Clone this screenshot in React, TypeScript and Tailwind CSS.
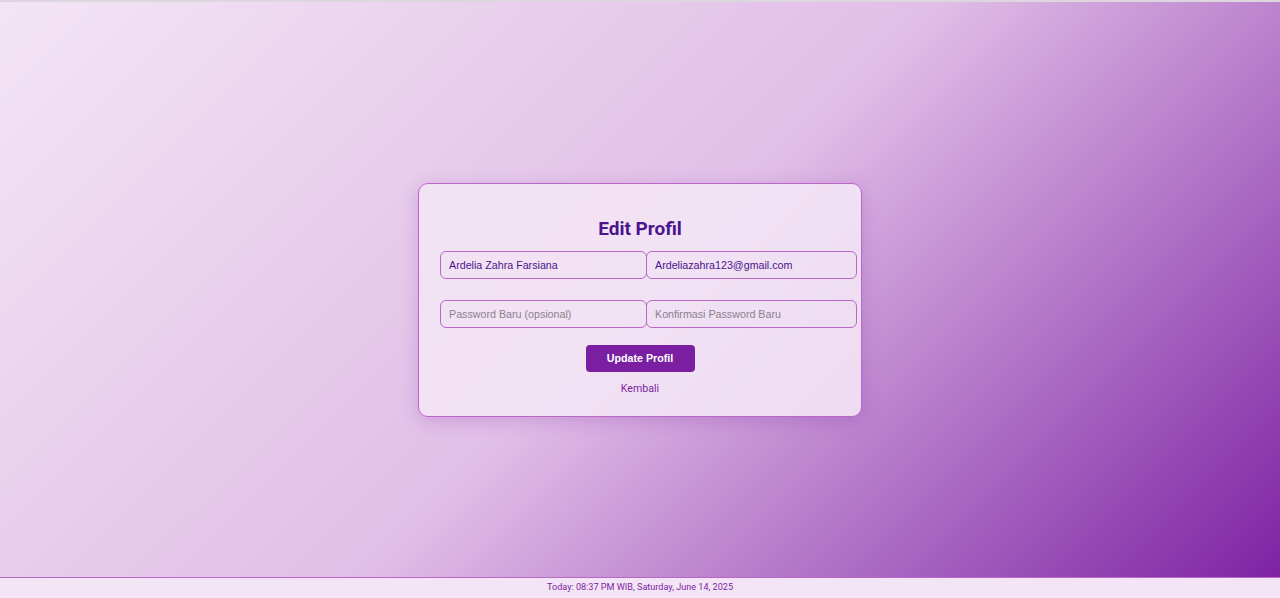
import React, { useState } from 'react';

export default function App() {
  const [name, setName] = useState('Ardelia Zahra Farsiana');
  const [email, setEmail] = useState('Ardeliazahra123@gmail.com');
  const [password, setPassword] = useState('');
  const [confirm, setConfirm] = useState('');

  const inputClass =
    "h-[28px] rounded-[6px] border border-[#ba68c8] bg-transparent pl-[8px] pr-2 text-[10.7px] text-[#4a148c] placeholder:text-[#8c7f8e] outline-none";

  return (
    <div className="relative h-screen w-full overflow-hidden bg-[linear-gradient(135deg,#f3e5f5_0%,#e1bee7_50%,#7b1fa2_100%)] font-['Liberation_Sans',Arial,sans-serif]">
      {/* top edge line */}
      <div className="absolute left-0 right-0 top-0 h-[2px] bg-[#ddd6de]" />

      <div className="flex h-full items-center justify-center">
        {/* Card */}
        <div className="mt-[1px] flex w-[444px] flex-col rounded-[10px] border border-[#ba68c8] bg-[#f3e5f5]/90 pt-[31px] pb-[19px] shadow-[0_4px_18px_rgba(123,31,162,0.22)]">
          <h1 className="text-center font-['Roboto',sans-serif] text-[19px] font-bold leading-[28px] text-[#4a148c]">
            Edit Profil
          </h1>

          <div className="mt-[8px] flex flex-col gap-[21px] pl-[21px]">
            <div className="flex">
              <input
                className={`${inputClass} w-[207px]`}
                value={name}
                onChange={(e) => setName(e.target.value)}
              />
              <input
                className={`${inputClass} ml-[-1px] w-[211px]`}
                value={email}
                onChange={(e) => setEmail(e.target.value)}
              />
            </div>
            <div className="flex">
              <input
                type="password"
                className={`${inputClass} w-[207px]`}
                placeholder="Password Baru (opsional)"
                value={password}
                onChange={(e) => setPassword(e.target.value)}
              />
              <input
                type="password"
                className={`${inputClass} ml-[-1px] w-[211px]`}
                placeholder="Konfirmasi Password Baru"
                value={confirm}
                onChange={(e) => setConfirm(e.target.value)}
              />
            </div>
          </div>

          <div className="mt-[17px] flex justify-center">
            <button className="h-[27px] w-[109px] rounded-[4px] bg-[#7b1fa2] text-[10.7px] font-bold text-white">
              Update Profil
            </button>
          </div>

          <a
            href="#"
            className="mt-[9px] block text-center font-['Roboto',sans-serif] text-[10.6px] leading-[16px] text-[#7b1fa2]"
          >
            Kembali
          </a>
        </div>
      </div>

      {/* Footer */}
      <footer className="absolute bottom-0 left-0 right-0 flex h-[21px] items-center justify-center border-t border-[#ba68c8] bg-[#f3e5f5] font-['Roboto',sans-serif] text-[9.1px] text-[#7b1fa2]">
        Today: 08:37 PM WIB, Saturday, June 14, 2025
      </footer>
    </div>
  );
}
